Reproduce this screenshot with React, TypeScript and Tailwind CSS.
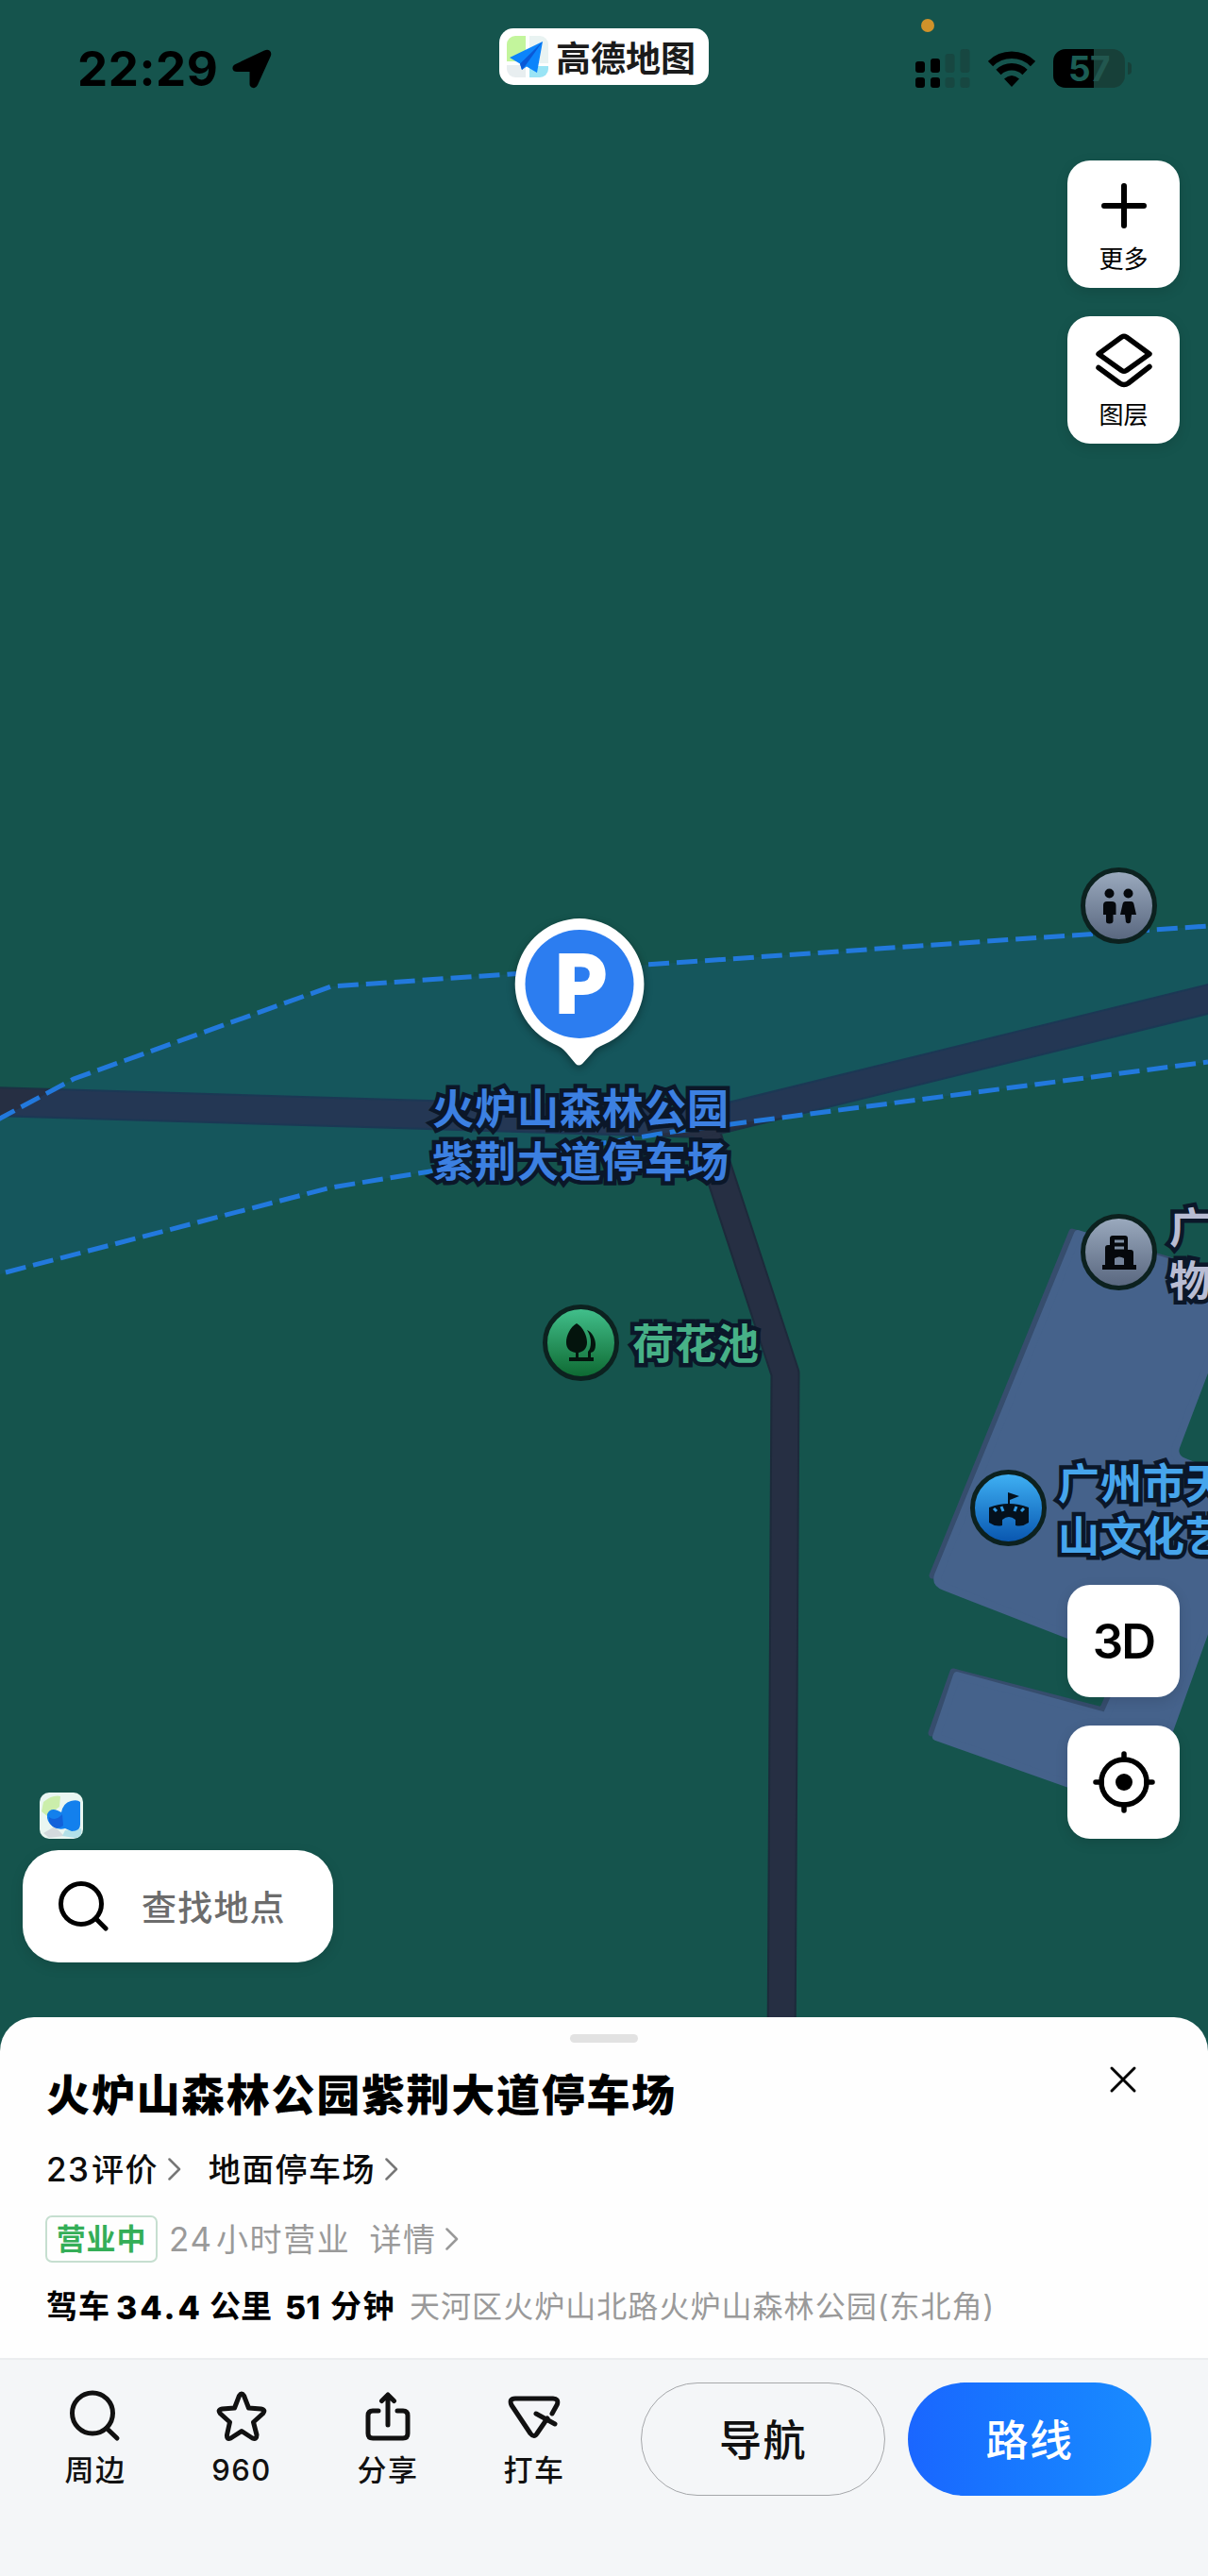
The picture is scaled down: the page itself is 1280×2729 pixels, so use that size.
import type { ReactNode } from "react";
import clsx from "clsx";

type PoiProps = {
  className: string;
  tone: string;
  children: ReactNode;
};

type ActionProps = {
  label: string;
  children: ReactNode;
};

const actionIcon = {
  width: 60,
  height: 60,
  viewBox: "0 0 60 60",
  fill: "none",
  stroke: "currentColor",
  strokeWidth: 5,
  strokeLinecap: "round" as const,
  strokeLinejoin: "round" as const,
};

const mapLabel =
  "absolute whitespace-nowrap text-[44px] leading-[56px] tracking-[1px] font-bold [stroke-linejoin:round] [paint-order:stroke_fill] [-webkit-text-stroke:9px_#0b1729]";

function AmapLogo() {
  return (
    <svg width="44" height="44" viewBox="0 0 44 44">
      <clipPath id="logo-clip">
        <rect width="44" height="44" rx="9" />
      </clipPath>
      <g clipPath="url(#logo-clip)">
        <rect width="44" height="44" fill="#fdfefe" />
        <path d="M0 0H20V27H0Z" fill="#c3f59c" />
        <path d="M24 0H44V29H24Z" fill="#e9f3f2" />
        <path d="M0 31H20V44H0Z" fill="#e8eef0" />
        <path d="M24 32H44V44H24Z" fill="#9ae4f5" />
      </g>
      <path d="M38 6L3 23L14 29.5L16 36L21 32.5L32 39Z" fill="#0b84fb" />
      <path d="M38 6L14 29.5L16 36L20 31Z" fill="#0a58d6" />
    </svg>
  );
}

function MapCanvas() {
  return (
    <svg
      className="absolute inset-0"
      width="1280"
      height="2173"
      viewBox="0 0 1280 2173"
      fill="none"
    >
      {/* buildings */}
      <g strokeLinejoin="round">
        <path
          d="M1136 1305L1240 1335V1400L1100 1640L988 1669ZM1010 1771L1168 1812L1190 1762L1199 1830L987 1836Z"
          fill="#364d6d"
          stroke="#364d6d"
          strokeWidth="7"
        />
        <path
          d="M1142 1307L1240 1338L1290 1354V1417L1246 1533Q1243 1543 1253 1548L1290 1563V1692L1209 1917L992 1840L1014 1775L1172 1818L1199 1758L1001 1681Q991 1677 994 1669Z"
          fill="#45628b"
          stroke="#45628b"
          strokeWidth="8"
        />
      </g>

      {/* roads */}
      <g strokeLinejoin="round">
        <path d="M745 1190L832 1455L828 2180" stroke="#1d2a3b" strokeWidth="31" />
        <path
          d="M-10 1167L453 1181L745 1190L1290 1056"
          stroke="#1c3144"
          strokeWidth="32"
        />
        <path d="M745 1190L832 1455L828 2180" stroke="#262f43" strokeWidth="27" />
        <path
          d="M-10 1167L453 1181L745 1190L1290 1056"
          stroke="#262f43"
          strokeWidth="28"
        />
      </g>

      {/* park boundary */}
      <path
        d="M0 1185L78 1143L351 1045L1280 981V1125L713 1199L351 1258L0 1350Z"
        fill="#1c68b7"
        fillOpacity="0.15"
      />
      <g stroke="#2279dd" strokeWidth="5" strokeDasharray="22 8">
        <path d="M-4 1187L78 1143L351 1045L1280 981" />
        <path d="M6 1348L351 1258L713 1199L1280 1125" />
      </g>
    </svg>
  );
}

function Poi({ className, tone, children }: PoiProps) {
  return (
    <div
      className={clsx(
        "absolute flex size-[81px] items-center justify-center rounded-full border-[5px] border-[#0c211f] bg-gradient-to-b",
        tone,
        className
      )}
    >
      {children}
    </div>
  );
}

function ParkingPin() {
  return (
    <div className="absolute left-[544px] top-[973px] flex h-[156px] w-[140px] justify-center drop-shadow-[0_3px_4px_rgba(0,0,0,0.35)]">
      <svg className="absolute inset-0" width="140" height="156" viewBox="0 0 140 156">
        <path
          d="M70 0A69.500 69.500 0 0 1 96 133.500Q87 137 83 143L73 154Q69 157 66 154L56 142Q51 136 43 133A69.500 69.500 0 0 1 70 0Z"
          fill="#fff"
        />
        <circle cx="70" cy="69.500" r="57.500" fill="#2c7df0" />
      </svg>
      <span className="relative mt-[14px] ml-1 font-['Inter',sans-serif] text-[83px] leading-[110px] font-bold text-white [stroke-linejoin:round] [-webkit-text-stroke:4px_#fff]">
        P
      </span>
    </div>
  );
}

function StatusBar() {
  return (
    <header className="relative flex h-[120px] items-start font-['Inter','Noto_Sans_CJK_SC',sans-serif]">
      <div className="flex w-[529px] items-center pt-[48px] pl-[82px] text-black">
        <span className="w-[164px] text-[51px] leading-[50px] font-bold tracking-[0.600px]">
          22:29
        </span>
        <svg width="42" height="42" viewBox="0 0 42 42">
          <path
            d="M39.500 1.500Q42 3 41 7L27 38Q25 42 22 41Q18.500 40 18.500 37V24H5Q1 24 .5 21Q0 17.500 3.500 16L34 1.500Q37.500 0 39.500 1.500Z"
            fill="currentColor"
          />
        </svg>
      </div>

      <div className="mt-[30px] flex h-[60px] w-[222px] items-center gap-[8px] rounded-[15px] bg-white pl-2">
        <AmapLogo />
        <span className="font-['Noto_Sans_CJK_SC',sans-serif] text-[37px] leading-[56px] font-bold whitespace-nowrap text-[#1b1b1b]">
          高德地图
        </span>
      </div>

      <span className="absolute top-5 left-[976px] size-[14px] rounded-full bg-[#d0922a]" />

      <div className="mt-[52px] ml-[219px] flex h-[42px] items-start">
        <svg width="58" height="42" viewBox="0 0 58 42">
          <g fill="#000">
            <rect x="0" y="13" width="10" height="12" rx="3" />
            <rect x="16" y="10" width="10" height="15" rx="3" />
            <rect x="0" y="30" width="10" height="11" rx="3" />
            <rect x="16" y="30" width="10" height="11" rx="3" />
          </g>
          <g fill="#174741">
            <rect x="31.500" y="5" width="10" height="20" rx="3" />
            <rect x="47.500" y="0" width="10" height="25" rx="3" />
            <rect x="31.500" y="30" width="10" height="11" rx="3" />
            <rect x="47.500" y="30" width="10" height="11" rx="3" />
          </g>
        </svg>
        <svg className="mt-[2px] ml-[19px]" width="50" height="38" viewBox="0 0 50 38">
          <g stroke="#000" strokeWidth="7.500" fill="none">
            <path d="M2.500 13.500A32 32 0 0 1 47.500 13.500" />
            <path d="M11 22.500A20 20 0 0 1 39 22.500" />
          </g>
          <path d="M25 38L17 29.500Q25 22.500 33 29.500Z" fill="#000" />
        </svg>
        <div className="ml-[19px] flex h-[41px] w-[76px] items-center justify-center rounded-[13px] bg-[linear-gradient(90deg,#000_57%,#174039_57%)] text-[37px] leading-[41px] font-bold tracking-[-0.500px]">
          <span className="text-[#1b5d54]">5</span>
          <span className="text-[#22574f]">7</span>
        </div>
        <span className="mt-[14px] ml-[3px] h-[13px] w-1 rounded-r-full bg-[#174039]" />
      </div>
    </header>
  );
}

function Chevron({ className = "stroke-[#777]" }: { className?: string }) {
  return (
    <svg
      className={className}
      width="14"
      height="24"
      viewBox="0 0 14 24"
      fill="none"
      strokeWidth="2.500"
      strokeLinecap="round"
      strokeLinejoin="round"
    >
      <path d="M1.500 1.500L12 12L1.500 22.500" />
    </svg>
  );
}

function Action({ label, children }: ActionProps) {
  return (
    <button className="flex w-[155px] flex-col items-center text-[#111]">
      {children}
      <span className="mt-[5px] pl-[1px] font-['Inter','Noto_Sans_CJK_SC',sans-serif] text-[31px] leading-[46px] font-medium tracking-[1.500px]">
        {label}
      </span>
    </button>
  );
}

const floating =
  "flex w-[119px] flex-col items-center rounded-[24px] bg-white text-black shadow-[0_4px_14px_rgba(0,0,0,0.12)]";

export default function App() {
  return (
    <main className="flex h-[2729px] w-[1280px] flex-col overflow-hidden bg-[#f4f6f8] font-['Noto_Sans_CJK_SC',sans-serif]">
      <section className="relative flex h-[2173px] shrink-0 flex-col overflow-hidden bg-[#15544d]">
        <MapCanvas />

        <Poi className="left-[1145px] top-[919px]" tone="from-[#9aa9bd] to-[#5a6880]">
          <svg width="36" height="38" viewBox="0 0 36 38" fill="#05080c">
            <circle cx="7.500" cy="5.500" r="5" />
            <circle cx="27.500" cy="5.500" r="5" />
            <path d="M5 14H10Q14.500 14 14.500 18V28H11.500V35Q11 37.500 7.500 37.500Q4 37.500 4 35V28H1V18Q1 14 5 14Z" />
            <path d="M24.500 14H30.500Q33 14 33.500 17L36 28H31L30 36Q27.500 38.500 25 36L24 28H19L21.500 17Q22 14 24.500 14Z" />
          </svg>
        </Poi>
        <Poi className="left-[1145px] top-[1286px]" tone="from-[#9aa9bd] to-[#5a6880]">
          <svg width="38" height="38" viewBox="0 0 38 38">
            <path
              d="M9 4Q9 1 12 1H25Q28 1 28 4V16H31Q34 16 34 19V32H37V37H1V32H4V14Q4 11 7 11H9Z"
              fill="#05080c"
            />
            <path d="M14 7H24M14 14H24" stroke="#8090a5" strokeWidth="3" />
            <path d="M14 32V25Q19 22 24 25V32Z" fill="#74839a" />
          </svg>
        </Poi>
        <Poi className="left-[1028px] top-[1557px]" tone="from-[#3fb0f3] to-[#0a57b0]">
          <svg width="44" height="40" viewBox="0 0 44 40">
            <path d="M21 3L33 7L23 11V19H21Z" fill="#04101c" />
            <path
              d="M1 19Q22 11 43 19V35Q36 40 29 38V32Q22 26 15 32V38Q8 40 1 35Z"
              fill="#04101c"
            />
            <path
              d="M6 20L9 23M14 18L16 23M30 18L28 23M38 20L35 23"
              stroke="#2e9ae6"
              strokeWidth="3"
            />
          </svg>
        </Poi>
        <Poi className="left-[575px] top-[1382px]" tone="from-[#41bf8b] to-[#0e6b33]">
          <svg width="40" height="44" viewBox="0 0 40 44">
            <path
              d="M15 1C22 5 26 14 26 21C26 28 22 31 17 32V37H27V31Q30 28 30 21Q30 14 26 8C31 10 35 17 35 23C35 28 34 31 30 32V37H33V41H7V37H14V32C8 31 4 28 4 21C4 14 8 5 15 1Z"
              fill="#04140d"
            />
          </svg>
        </Poi>

        <span className={clsx(mapLabel, "left-[458px] top-[1144px] text-[#3c80e2]")}>
          火炉山森林公园
          <br />
          紫荆大道停车场
        </span>
        <span className={clsx(mapLabel, "left-[670px] top-[1393px] text-[#47b187]")}>
          荷花池
        </span>
        <span className={clsx(mapLabel, "left-[1239px] top-[1270px] text-[#b9bdd3]")}>
          广
          <br />
          物
        </span>
        <span className={clsx(mapLabel, "left-[1121px] top-[1541px] text-[#46a5ec]")}>
          广州市天
          <br />
          山文化艺
        </span>
        <ParkingPin />

        <StatusBar />

        <div className="relative mt-[50px] mr-[30px] flex flex-col gap-[30px] self-end">
          <button className={clsx(floating, "h-[135px]")}>
            <svg className="mt-6" width="48" height="48" viewBox="0 0 48 48">
              <path d="M24 3V45M3 24H45" stroke="#000" strokeWidth="6" strokeLinecap="round" />
            </svg>
            <span className="mt-[11px] text-[26px] leading-[40px]">更多</span>
          </button>
          <button className={clsx(floating, "h-[135px]")}>
            <svg
              className="mt-[18px]"
              width="60"
              height="58"
              viewBox="0 0 60 58"
              fill="none"
              stroke="#000"
              strokeWidth="5.500"
              strokeLinecap="round"
              strokeLinejoin="round"
            >
              <path d="M27.500 4Q30 2.500 32.500 4L57 22L32.500 39.500Q30 41 27.500 39.500L3 22Z" />
              <path d="M3 36.500L25.500 53Q30 56 34.500 53L57 35.500" />
            </svg>
            <span className="mt-[7px] text-[26px] leading-[40px]">图层</span>
          </button>
        </div>

        <div className="relative mt-[1209px] flex items-start justify-between pr-[30px] pl-6">
          <div className="mt-[220px] flex flex-col">
            <svg className="ml-[18px]" width="46" height="49" viewBox="0 0 46 49">
              <rect width="46" height="49" rx="10" fill="#e9f6f1" />
              <path d="M4 10Q14 2 22 4L21 15L8 25L2 20Z" fill="#cbeeab" />
              <path d="M4 43L16 36L26 46L10 48Z" fill="#d3dadd" />
              <path d="M27 40L44 38Q46 48 37 48L24 46Z" fill="#b2e1e8" />
              <path
                d="M8 23Q11 16 19 19L23 21Q25 11 33 9Q40 7 43 10V34Q43 41 34 41L27 38Q20 40 14 36Q7 31 8 23Z"
                fill="#1380ed"
              />
              <path d="M10 26Q17 31 24 23L25 35Q19 40 14 36Q9 32 10 26Z" fill="#1261da" />
            </svg>
            <div className="mt-[12px] flex h-[119px] w-[329px] items-center rounded-[38px] bg-white pl-[37px] shadow-[0_4px_14px_rgba(0,0,0,0.12)]">
              <svg width="56" height="56" viewBox="0 0 56 56" fill="none" stroke="#000" strokeWidth="5">
                <circle cx="25" cy="25" r="21.500" />
                <path d="M41 41L51 51" strokeLinecap="round" />
              </svg>
              <span className="ml-[33px] text-[37px] font-medium tracking-[1.200px] text-[#6c6c6c]">
                查找地点
              </span>
            </div>
          </div>

          <div className="flex flex-col gap-[30px]">
            <button
              className={clsx(
                floating,
                "h-[119px] justify-center pt-[1px] font-['Inter',sans-serif] text-[51px] font-semibold tracking-[-2px]"
              )}
            >
              3D
            </button>
            <button className={clsx(floating, "h-[120px] justify-center")}>
              <svg width="66" height="66" viewBox="0 0 66 66" fill="none" stroke="#000" strokeWidth="5.500">
                <circle cx="33" cy="33" r="24" />
                <circle cx="33" cy="33" r="9" fill="#000" stroke="none" />
                <path d="M33 3V9M33 57V63M3 33H9M57 33H63" strokeLinecap="round" />
              </svg>
            </button>
          </div>
        </div>
      </section>

      <section className="relative -mt-9 flex h-[363px] shrink-0 flex-col rounded-t-[36px] border-b-2 border-[#ebedef] bg-[#fefefe] pt-[18px] pl-[49px] font-['Inter','Noto_Sans_CJK_SC',sans-serif]">
        <div className="ml-[555px] h-[9px] w-[72px] rounded-full bg-[#e2e2e2]" />

        <div className="flex h-[84px] items-start justify-between pr-[75px]">
          <h1 className="mt-[16px] font-['Noto_Sans_CJK_SC',sans-serif] text-[46px] leading-[72px] font-black tracking-[1.700px] text-black">
            火炉山森林公园紫荆大道停车场
          </h1>
          <button className="mt-[24px]">
            <svg width="30" height="30" viewBox="0 0 30 30">
              <path d="M3 3L27 27M27 3L3 27" stroke="#000" strokeWidth="3" strokeLinecap="round" />
            </svg>
          </button>
        </div>

        <div className="mt-[25px] flex h-[50px] items-center text-[34px] font-medium tracking-[1.400px] text-[#0c0c0c]">
          <span className="w-[48px] text-[35px]">23</span>
          <span className="mr-[10px]">评价</span>
          <Chevron />
          <span className="mr-[10px] ml-[29px]">地面停车场</span>
          <Chevron />
        </div>

        <div className="mt-[24px] flex h-[50px] items-center text-[34px] tracking-[1.600px] text-[#9a9a9a]">
          <span className="-ml-px flex h-[50px] w-[119px] items-center justify-center rounded-[7px] border-2 border-[#c6dfd0] text-[31px] font-bold tracking-[0.800px] text-[#34ae57]">
            营业中
          </span>
          <span className="ml-[12px] w-[50px] text-[35px]">24</span>
          <span>小时营业</span>
          <span className="mr-[9px] ml-[20px]">详情</span>
          <Chevron className="stroke-[#999]" />
        </div>

        <div className="mt-[22px] flex h-[50px] items-center whitespace-nowrap text-[33px] font-bold text-black">
          <span className="w-[74px] tracking-[1px]">驾车</span>
          <span className="w-[99px] text-[34px] font-extrabold tracking-[3px]">34.4</span>
          <span className="w-[80px]">公里</span>
          <span className="w-[48px] text-[34px] font-extrabold">51</span>
          <span className="w-[84px] tracking-[1.500px]">分钟</span>
          <span className="text-[32px] font-normal tracking-[1.050px] text-[#9a9a9a]">
            天河区火炉山北路火炉山森林公园(东北角)
          </span>
        </div>
      </section>

      <nav className="flex items-start pt-[24px] pl-[23px]">
        <div className="flex w-[656px] pt-[5px]">
          <Action label="周边">
            <svg {...actionIcon}>
              <circle cx="27" cy="27.500" r="21.500" />
              <path d="M42 43.500L53 54" />
            </svg>
          </Action>
          <Action label="960">
            <svg {...actionIcon}>
              <path d="M27.500 9Q30 5 32.500 9L37.500 22L50.500 23Q56 24 52.500 28L42.500 37L46 50.500Q46 56 41.500 54L30 46.500L18.500 54Q14 56 14.500 50.500L17.500 37L7.500 28Q4 24 9.500 23L22.500 22Z" />
            </svg>
          </Action>
          <Action label="分享">
            <svg {...actionIcon}>
              <path d="M20 25H14Q9 25 9 30V49Q9 54 14 54H46Q51 54 51 49V30Q51 25 46 25H40" />
              <path d="M30 40V8M23.500 14.500L30 8L36.500 14.500" />
            </svg>
          </Action>
          <Action label="打车">
            <svg {...actionIcon}>
              <path d="M49 28L54.500 18Q56 12 50 12H10Q3 12 6 19L26 49Q30 54 33 49L44 33" />
              <path d="M32 28L52 39" />
            </svg>
          </Action>
        </div>
        <button className="h-[120px] w-[259px] rounded-full border-[1.500px] border-[#a5a7aa] pb-[2px] text-[45px] font-medium tracking-[1.500px] text-[#111]">
          导航
        </button>
        <button className="ml-6 h-[120px] w-[258px] rounded-full bg-gradient-to-r from-[#1a66ff] to-[#1a8cff] pb-[2px] text-[45px] font-medium tracking-[1.500px] text-white">
          路线
        </button>
      </nav>
    </main>
  );
}
